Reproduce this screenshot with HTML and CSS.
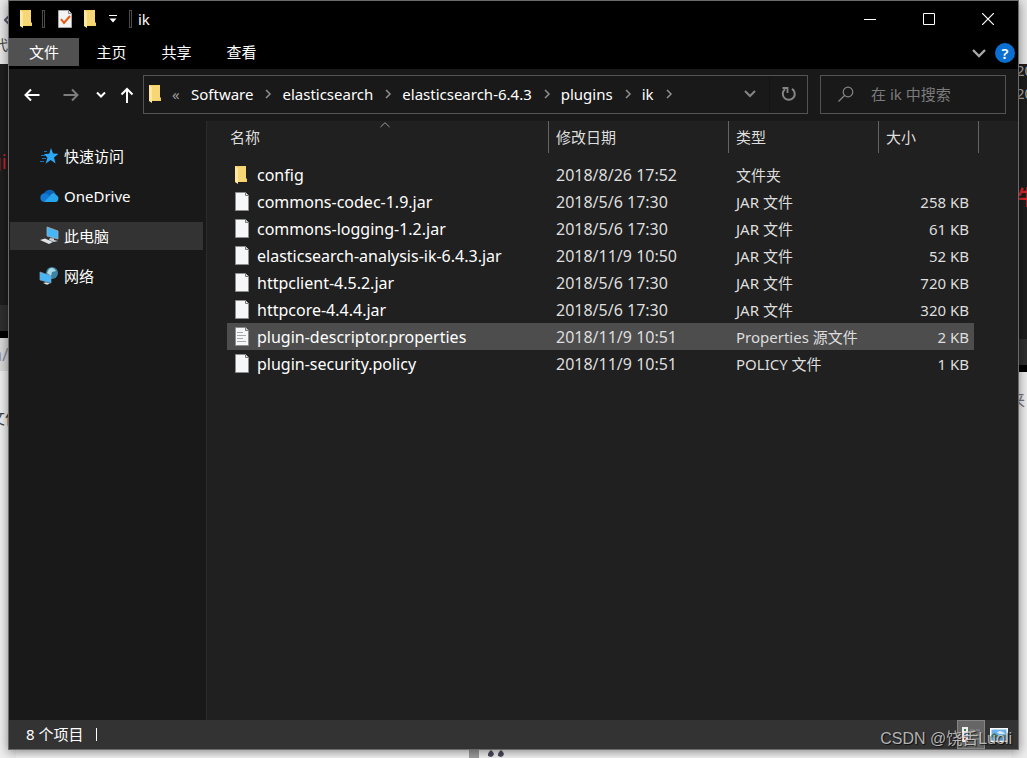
FILE: index.html
```html
<!DOCTYPE html>
<html lang="zh-CN">
<head>
<meta charset="utf-8">
<title>ik</title>
<link rel="stylesheet" href="styles.css">
</head>
<body>
<svg class="defs" aria-hidden="true">
  <symbol id="folder" viewBox="0 0 14 18">
    <path d="M1 0h11v12l1 1v3H1z" fill="#f3cd66"/>
    <path d="M4 1l8-1v15l-8 1z" fill="#f7d775"/>
    <path d="M1 0l3 2v16l-3-2z" fill="#ffe7a3"/>
  </symbol>
  <symbol id="page" viewBox="0 0 16 19">
    <path d="M1.500 .5h10l3 3v15h-13z" fill="#f5f7f8" stroke="#8b8d8e"/>
    <path d="M11.500 .5v3h3" fill="#dfe1e2" stroke="#77797a"/>
  </symbol>
  <symbol id="chev" viewBox="0 0 8 10"><path d="M2 1l4 4-4 4" fill="none" stroke="#8f8f8f" stroke-width="1.500"/></symbol>
</svg>

<div class="backdrop" aria-hidden="true">
  <div class="strip strip-left">
    <div class="band light-top"></div><div class="band dark"></div><div class="band grey"></div><div class="band black"></div><div class="band pale"></div><div class="band white"></div>
    <span class="bit bit-code">代</span><span class="bit bit-red-l">gi</span><span class="bit bit-slash">n/</span><span class="bit bit-wen">文件</span>
    <svg class="bit-arrow" viewBox="0 0 8 14"><path d="M7 1L1 7l6 6" fill="none" stroke="#55556b" stroke-width="2"/></svg>
  </div>
  <div class="strip strip-right">
    <div class="band light-top"></div><div class="band dark r-dark"></div><div class="band grey"></div><div class="band black r-black"></div><div class="band white"></div>
    <span class="bit bit-20a">20</span><span class="bit bit-20b">20</span><span class="bit bit-red-r">牛</span><span class="bit bit-lai">来</span>
  </div>
  <svg class="bottom-art" viewBox="0 0 40 10">
    <path d="M0 0h10v10H0z" fill="#a0a0a0"/>
    <path d="M19 0h14v2H19zM20 4l2-2 2 2 1 2-1 2-2 1-3-1v-2zM30 4l2-2 2 2 1 2-1 2-2 1-3-1v-2z" fill="#4b4b5e"/>
  </svg>
</div>

<main class="window">
  <header class="titlebar">
    <svg class="folder"><use href="#folder"/></svg>
    <i class="sep"></i>
    <button class="quick" aria-label="属性"><svg class="check" viewBox="0 0 16 19"><path d="M1.500 1.500h10l3 3v14h-13z" fill="#f3f3f3" stroke="#a7a7a7"/><path d="M11.500 1.500v3h3" fill="#ddd" stroke="#888"/><path d="M4 10l3 4 6-7" fill="none" stroke="#e8590c" stroke-width="2"/></svg></button>
    <button class="quick new" aria-label="新建文件夹"><svg class="folder"><use href="#folder"/></svg></button>
    <button class="quick" aria-label="自定义快速访问工具栏"><svg class="custom" viewBox="0 0 8 8"><path d="M0 .5h8" stroke="#fff"/><path d="M.5 3.500h7L4 7.500z" fill="#fff"/></svg></button>
    <i class="sep sep-last"></i>
    <h1>ik</h1>
    <div class="caption">
      <button aria-label="最小化"><svg viewBox="0 0 12 12"><path d="M0 6.500h12" stroke="#fff"/></svg></button>
      <button aria-label="最大化"><svg viewBox="0 0 12 12"><path d="M.5 .5h11v11H.5z" fill="none" stroke="#fff"/></svg></button>
      <button aria-label="关闭"><svg viewBox="0 0 12 12"><path d="M0 0l12 12M12 0L0 12" stroke="#fff" stroke-width="1.200"/></svg></button>
    </div>
  </header>

  <nav class="tabs">
    <button class="tab active">文件</button><button class="tab">主页</button><button class="tab">共享</button><button class="tab">查看</button>
    <div class="tabs-end">
      <button aria-label="展开功能区"><svg class="ribbon" viewBox="0 0 14 9"><path d="M1 1l6 6 6-6" fill="none" stroke="#a8a8a8" stroke-width="2.400"/></svg></button>
      <button class="help" aria-label="帮助">?</button>
    </div>
  </nav>

  <div class="nav">
    <div class="arrows">
      <button aria-label="后退"><svg class="i16" viewBox="0 0 16 16"><path d="M15.500 8H1.500M7 2.500L1.500 8 7 13.500" fill="none" stroke="#fff" stroke-width="2"/></svg></button>
      <button aria-label="前进"><svg class="i16" viewBox="0 0 16 16"><path d="M.5 8h14M9 2.500L14.500 8 9 13.500" fill="none" stroke="#7d7d7d" stroke-width="2"/></svg></button>
      <button aria-label="最近浏览的位置"><svg class="recent" viewBox="0 0 10 8"><path d="M1 1.500l4 4 4-4" fill="none" stroke="#fff" stroke-width="2"/></svg></button>
      <button aria-label="上移"><svg class="up" viewBox="0 0 14 16"><path d="M7 16V2M1.500 7.500L7 2l5.500 5.500" fill="none" stroke="#fff" stroke-width="2"/></svg></button>
    </div>
    <div class="address">
      <svg class="folder"><use href="#folder"/></svg>
      <span class="more">«</span>
      <a href="#">Software</a><svg class="chev"><use href="#chev"/></svg>
      <a href="#">elasticsearch</a><svg class="chev"><use href="#chev"/></svg>
      <a href="#">elasticsearch-6.4.3</a><svg class="chev"><use href="#chev"/></svg>
      <a href="#">plugins</a><svg class="chev"><use href="#chev"/></svg>
      <a href="#">ik</a><svg class="chev"><use href="#chev"/></svg>
      <button class="drop" aria-label="历史记录"><svg viewBox="0 0 12 8"><path d="M1 1l5 5 5-5" fill="none" stroke="#858585" stroke-width="2"/></svg></button>
      <button class="refresh" aria-label="刷新"><svg viewBox="0 0 16 16"><path d="M11 2.800A6 6 0 1 1 4 3.200" fill="none" stroke="#858585" stroke-width="2"/><path d="M1.500 2H6.500V7" fill="none" stroke="#858585" stroke-width="1.800"/></svg></button>
    </div>
    <label class="search">
      <svg viewBox="0 0 16 16"><circle cx="10" cy="6" r="4.800" fill="none" stroke="#858585" stroke-width="1.200"/><path d="M6.500 9.500L.5 15.500" stroke="#858585" stroke-width="1.200"/></svg>
      <input type="text" placeholder="在 ik 中搜索" aria-label="在 ik 中搜索">
    </label>
  </div>

  <div class="body">
    <aside class="side">
      <a href="#"><svg viewBox="0 0 20 20"><path d="M12 2l2 5.500 5.500.3-4.500 3.700 1.600 6-5-3.400-5 3.600 1.800-6L5 8l5.200-.2z" fill="#2ba8f5"/><path d="M5 5.500h3M2 9.500h5M3 12.500h4M1 15.500h4" stroke="#1877b8" stroke-width="1.200"/></svg>快速访问</a>
      <a href="#"><svg viewBox="0 0 20 20"><path d="M5 8a6 6 0 0 1 11-1l1 4-9 3z" fill="#0a63b8"/><path d="M4.500 16A4.500 4.500 0 0 1 5 7.300c3 0 5 2 7 3.500l-7 5.200z" fill="#1279d4"/><path d="M11 10c1-3 5-4 6-1 3 .5 3.500 6 0 7H5z" fill="#28a4ec"/></svg>OneDrive</a>
      <a href="#" class="current"><svg viewBox="0 0 20 20"><path d="M8 1l11 4v8L8 10z" fill="#46b5f6" stroke="#9db1bd" stroke-width=".8"/><path d="M11 12l4 .5v1.500l4 1-4 1-5-2z" fill="#c9d2d8"/><path d="M1 14l5-1.500 8 3.500-4 2z" fill="#dfe3e6"/></svg>此电脑</a>
      <a href="#"><svg viewBox="0 0 20 20"><circle cx="13" cy="7" r="6" fill="#3d83a5"/><path d="M10 3c3-2 5-1 7 2l-4 1-1 4-4-3z" fill="#a9d9e4"/><path d="M1 6l11 4v7L1 14z" fill="#48b6f7" stroke="#78a5bf" stroke-width=".7"/><path d="M4 17l3-.7 4 1.200-3 1.200z" fill="#d9e1e5"/></svg>网络</a>
    </aside>
    <section class="pane">
      <table class="files">
        <colgroup><col class="c-name"><col class="c-date"><col class="c-type"><col class="c-size"><col class="c-end"></colgroup>
        <thead><tr><th class="h-name">名称<svg class="sort" viewBox="0 0 10 6"><path d="M.5 5L5 .7 9.500 5" fill="none" stroke="#9a9a9a"/></svg></th><th>修改日期</th><th>类型</th><th colspan="2">大小</th></tr></thead>
        <tbody>
          <tr><td class="name"><svg class="folder"><use href="#folder"/></svg>config</td><td class="date">2018/8/26 17:52</td><td>文件夹</td><td class="size"></td></tr>
          <tr><td class="name"><svg class="page"><use href="#page"/></svg>commons-codec-1.9.jar</td><td class="date">2018/5/6 17:30</td><td>JAR 文件</td><td class="size">258 KB</td></tr>
          <tr><td class="name"><svg class="page"><use href="#page"/></svg>commons-logging-1.2.jar</td><td class="date">2018/5/6 17:30</td><td>JAR 文件</td><td class="size">61 KB</td></tr>
          <tr><td class="name"><svg class="page"><use href="#page"/></svg>elasticsearch-analysis-ik-6.4.3.jar</td><td class="date">2018/11/9 10:50</td><td>JAR 文件</td><td class="size">52 KB</td></tr>
          <tr><td class="name"><svg class="page"><use href="#page"/></svg>httpclient-4.5.2.jar</td><td class="date">2018/5/6 17:30</td><td>JAR 文件</td><td class="size">720 KB</td></tr>
          <tr><td class="name"><svg class="page"><use href="#page"/></svg>httpcore-4.4.4.jar</td><td class="date">2018/5/6 17:30</td><td>JAR 文件</td><td class="size">320 KB</td></tr>
          <tr class="hover"><td class="name"><svg class="page" viewBox="0 0 16 19"><use href="#page" width="16" height="19"/><path d="M3 5.500h6M3 8.500h9M3 11.500h6M3 14.500h9" stroke="#a5a8aa"/></svg>plugin-descriptor.properties</td><td class="date">2018/11/9 10:51</td><td>Properties 源文件</td><td class="size">2 KB</td></tr>
          <tr><td class="name"><svg class="page"><use href="#page"/></svg>plugin-security.policy</td><td class="date">2018/11/9 10:51</td><td>POLICY 文件</td><td class="size">1 KB</td></tr>
        </tbody>
      </table>
    </section>
  </div>

  <footer class="status">
    <span class="count">8 个项目</span><i class="bar"></i>
    <div class="views">
      <button class="view on" aria-label="详细信息"><svg viewBox="0 0 20 16"><path d="M1 0h6v15H1z" fill="#eee"/><path d="M3 2h2v2H3z" fill="#397a4d"/><path d="M3 6.500h2v2H3z" fill="#356fb5"/><path d="M3 11h2v2H3z" fill="#b54b35"/><path d="M9 3h4M15 3h4M9 8h4M15 8h4M9 12h4M15 12h4" stroke="#8c8c8c"/></svg></button>
      <button class="view" aria-label="大缩略图"><svg viewBox="0 0 18 14"><path d="M0 0h18v14H0z" fill="#fff"/><path d="M1.500 1.500h15v11h-15z" fill="#6eb1ea"/><path d="M1.500 7l3-2 4 3 8-1v3h-15z" fill="#3f7460"/><path d="M1.500 9.500l15-1v4h-15z" fill="#5b93c7"/><path d="M7 4l3-1 3 1 2 2H9z" fill="#d6ebfa"/></svg></button>
    </div>
  </footer>
</main>
<div class="watermark">CSDN @饶舌Luoli</div>
</body>
</html>
```
FILE: styles.css
```css
* { box-sizing: border-box; }
body {
  margin: 0;
  min-height: 100vh;
  display: flex;
  position: relative;
  overflow: hidden;
  background: #f4f4f4;
  color: #fff;
  font: 15px/20px "Noto Sans", "Noto Sans CJK SC", sans-serif;
}
button, input { font: inherit; color: inherit; border: 0; padding: 0; background: none; }
button { display: flex; align-items: center; justify-content: center; }
a { color: inherit; text-decoration: none; }
svg { display: block; flex: none; }
.defs { position: absolute; width: 0; height: 0; }

/* desktop behind the window */
.backdrop { position: absolute; inset: 0; overflow: hidden; }
.strip { position: absolute; top: 0; bottom: 0; width: 16px; display: flex; flex-direction: column; overflow: hidden; }
.strip-left { left: 0; }
.strip-right { right: 0; }
.band { flex: none; }
.light-top { height: 64px; background: #e6e6e6; }
.dark { height: 241px; background: #1d1d1d; }
.grey { height: 26px; background: #2f2f2f; }
.black { height: 7px; background: #000; }
.pale { height: 33px; background: #d8d8d8; }
.white { flex: 1; background: #eee; }
.r-dark { height: 275px; }
.bit { position: absolute; white-space: nowrap; line-height: 20px; }
.bit-code { left: -6px; top: 35px; color: #444; font-size: 14px; }
.bit-red-l { left: -10px; top: 152px; color: #c5262c; font-size: 19px; }
.bit-slash { left: -9px; top: 344px; color: #8a8f99; font-size: 18px; }
.bit-wen { left: -11px; top: 408px; color: #444; font-size: 16px; }
.bit-arrow { position: absolute; left: 4px; top: 13px; width: 8px; height: 14px; }
.bit-20a { left: 5px; top: 60px; color: #aaa; }
.bit-20b { left: 5px; top: 83px; color: #aaa; }
.bit-red-r { left: 6px; top: 188px; color: #d9262c; font-size: 20px; font-weight: 700; }
.bit-lai { left: -2px; top: 390px; color: #777; font-size: 16px; }
.bottom-art { position: absolute; left: 469px; bottom: 0; width: 40px; height: 10px; }

/* window */
.window {
  position: relative;
  flex: 1;
  min-width: 0;
  margin: 0 8px 8px 8px;
  display: flex;
  flex-direction: column;
  background: #191919;
  border: 1px solid #6b6b6b;
  box-shadow: 0 2px 10px rgba(0, 0, 0, .45);
}
.folder { width: 14px; height: 18px; }

.titlebar { display: flex; align-items: center; height: 37px; padding: 0 1px 2px 10px; background: #000; }
.sep { width: 3px; height: 18px; margin-left: 9px; border: 1px solid #4c4c4c; }
.quick { margin-left: 12px; }
.quick.new { margin-left: 10px; }
.check { width: 16px; height: 19px; }
.custom { width: 8px; height: 8px; }
.sep-last { margin-left: 12px; }
.titlebar h1 { margin: 0 0 0 6px; font-size: 15px; font-weight: 400; }
.caption { display: flex; margin-left: auto; align-self: stretch; }
.caption button { width: 59px; }
.caption svg { width: 12px; height: 12px; }

.tabs { display: flex; height: 31px; background: #000; align-items: flex-start; }
.tab { width: 65px; height: 28px; }
.tab.active { width: 70px; background: #515151; }
.tabs-end { display: flex; align-items: center; gap: 9px; margin-left: auto; padding-right: 3px; height: 30px; }
.ribbon { width: 14px; height: 9px; }
.help { width: 20px; height: 20px; border-radius: 50%; background: #0a6fd0; font-weight: 600; }

.nav { display: flex; padding: 6px 12px 7px 15px; }
.arrows { display: flex; align-items: center; width: 119px; }
.i16 { width: 16px; height: 16px; }
.arrows button + button { margin-left: 23px; }
.recent { width: 10px; height: 8px; }
.arrows button:nth-child(3) { margin-left: 17px; }
.arrows button:nth-child(4) { margin-left: 14px; }
.up { width: 14px; height: 16px; }
.address, .search { display: flex; align-items: center; height: 39px; border: 1px solid #535353; padding-bottom: 2px; }
.address { flex: 1; min-width: 0; padding-left: 4px; white-space: nowrap; }
.more { width: 10px; margin: 0 9px 0 10px; color: #999; }
.chev { width: 8px; height: 10px; margin: 0 10px 0 11px; }
.drop { width: 38px; height: 35px; margin-left: auto; }
.drop svg { width: 12px; height: 8px; }
.refresh { width: 38px; height: 35px; border-left: 1px solid #141414; }
.refresh svg { width: 16px; height: 16px; }
.search { width: 186px; margin-left: 12px; padding-left: 17px; gap: 17px; }
.search svg { width: 16px; height: 16px; }
.search input { flex: 1; width: 0; outline: 0; }
.search input::placeholder { color: #7b7b7b; opacity: 1; }

.body { flex: 1; display: flex; min-height: 0; }
.side { width: 197px; padding: 21px 3px 0 1px; display: flex; flex-direction: column; gap: 12px; }
.side a { display: flex; align-items: center; gap: 5px; height: 28px; padding-left: 29px; }
.side svg { width: 20px; height: 20px; }
.side .current { background: #333; }
.pane { flex: 1; background: #202020; border-left: 1px solid #2b2b2b; padding-left: 20px; }

.files { width: 752px; table-layout: fixed; border-collapse: separate; border-spacing: 0; color: #dedede; }
.c-name { width: 322px; }
.c-date { width: 180px; }
.c-type { width: 150px; }
.c-size { width: 95px; }
.c-end { width: 5px; }
th { position: relative; height: 32px; padding: 0 0 0 7px; font-weight: 400; text-align: left; border-right: 1px solid #636363; }
th.h-name { padding-left: 3px; }
.sort { position: absolute; left: 153px; top: 1px; width: 10px; height: 6px; }
tbody::before { content: ""; display: block; height: 8px; }
td { height: 27px; padding: 0 0 0 7px; white-space: nowrap; }
td.size { padding: 0 5px 0 0; text-align: right; }
td.date, td.name { font-size: 16px; }
td.name { display: flex; align-items: center; color: #fff; }
td.name .folder { margin-right: 9px; }
.page { width: 16px; height: 19px; margin-right: 7px; }
.hover td { background: #4d4d4d; }

.status { display: flex; align-items: center; height: 29px; padding: 0 5px 0 17px; background: #333; }
.count { padding-bottom: 2px; }
.bar { width: 1px; height: 13px; margin-left: 13px; background: #fff; }
.views { display: flex; margin-left: auto; height: 29px; }
.view { width: 28px; height: 29px; border: 1px solid transparent; }
.view svg { width: 18px; height: 14px; }
.view.on { background: #666; border-color: #858585; }
.view.on svg { width: 20px; height: 16px; }
.watermark {
  position: absolute;
  right: 15px;
  bottom: 8px;
  font: 16px/22px "Liberation Sans", "Noto Sans CJK SC", sans-serif;
  color: rgba(205, 205, 205, .85);
  text-shadow: 1px 1px 1px rgba(0, 0, 0, .7);
}
```
